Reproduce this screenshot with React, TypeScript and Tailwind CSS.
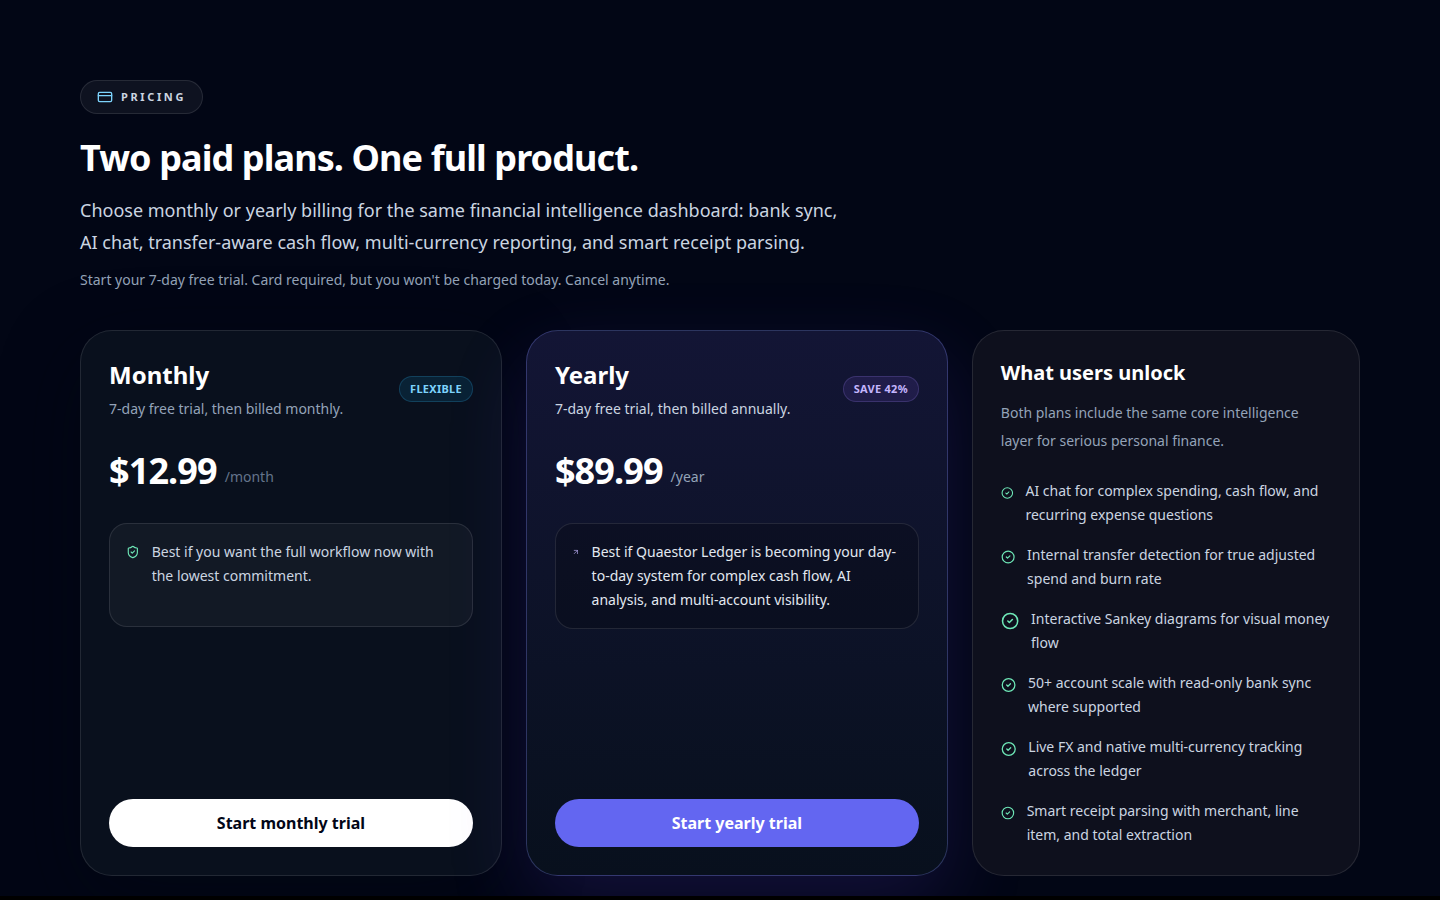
import { ArrowUpRight, CircleCheck, CreditCard, ShieldCheck } from "lucide-react";

const plans = [
  {
    name: "Monthly",
    billing: "7-day free trial, then billed monthly.",
    badge: "Flexible",
    price: "$12.99",
    period: "/month",
    note: "Best if you want the full workflow now with the lowest commitment.",
    icon: ShieldCheck,
    cta: "Start monthly trial",
    styles: {
      card: "border-white/10 bg-[#09101d] shadow-[0_24px_80px_rgba(2,6,18,0.45)]",
      billing: "text-[#94a3b8]",
      badge: "border-[#38bdf8]/20 bg-[#0ea5e9]/12 text-[#7dd3fc]",
      period: "text-[#64748b]",
      box: "border-white/10 bg-white/[0.04] text-[#cbd5e1]",
      icon: "text-[#6ee7b7]",
      button: "bg-white text-[#020617] hover:bg-slate-200",
    },
  },
  {
    name: "Yearly",
    billing: "7-day free trial, then billed annually.",
    badge: "Save 42%",
    price: "$89.99",
    period: "/year",
    note: "Best if Quaestor Ledger is becoming your day-to-day system for complex cash flow, AI analysis, and multi-account visibility.",
    icon: ArrowUpRight,
    cta: "Start yearly trial",
    styles: {
      card: "border-[#818cf8]/30 bg-linear-to-b from-[#131535] to-[#08101d] shadow-[0_30px_80px_rgba(95,62,215,0.18)]",
      billing: "text-[#cbd5e1]",
      badge: "border-[#a78bfa]/20 bg-[#8b5cf6]/12 text-[#c4b5fd]",
      period: "text-[#94a3b8]",
      box: "border-white/10 bg-black/20 text-[#e2e8f0]",
      icon: "text-[#c4b5fd]",
      button: "bg-[#6366f1] text-white hover:bg-[#818cf8]",
    },
  },
];

const features = [
  "AI chat for complex spending, cash flow, and recurring expense questions",
  "Internal transfer detection for true adjusted spend and burn rate",
  "Interactive Sankey diagrams for visual money flow",
  "50+ account scale with read-only bank sync where supported",
  "Live FX and native multi-currency tracking across the ledger",
  "Smart receipt parsing with merchant, line item, and total extraction",
];

const Pricing = () => {
  return (
    <section id="pricing" className="overflow-hidden bg-[#020615] px-6 pt-20 pb-5">
      <div className="mx-auto max-w-[1280px]">
        <div className="max-w-3xl">
          <div className="inline-flex items-center gap-2 rounded-full border border-white/10 bg-white/5 px-4 py-2 text-[11px] leading-4 font-bold tracking-[0.24em] text-[#cbd5e1] uppercase">
            <CreditCard className="h-4 w-4 text-[#7dd3fc]" />
            Pricing
          </div>
          <h2 className="mt-6 text-4xl font-bold tracking-tight text-white">
            Two paid plans. One full product.
          </h2>
          <p className="mt-4 text-lg leading-8 text-[#cbd5e1]">
            Choose monthly or yearly billing for the same financial intelligence dashboard: bank sync, AI chat,
            transfer-aware cash flow, multi-currency reporting, and smart receipt parsing.
          </p>
          <p className="mt-3 text-sm text-[#94a3b8]">
            Start your 7-day free trial. Card required, but you won't be charged today. Cancel anytime.
          </p>
        </div>

        <div className="mt-10 grid gap-6 lg:grid-cols-[1fr_1fr_0.92fr]">
          {plans.map((plan) => (
            <article key={plan.name} className={`flex flex-col rounded-[32px] border p-7 ${plan.styles.card}`}>
              <div className="flex items-center justify-between gap-4">
                <div>
                  <h3 className="text-2xl font-bold text-white">{plan.name}</h3>
                  <p className={`mt-2 text-sm ${plan.styles.billing}`}>{plan.billing}</p>
                </div>
                <span
                  className={`rounded-full border px-2.5 py-1 text-[11px] leading-4 font-bold tracking-wide uppercase ${plan.styles.badge}`}
                >
                  {plan.badge}
                </span>
              </div>

              <div className="mt-8 flex items-end gap-2">
                <span className="text-4xl font-bold tracking-tight text-white">{plan.price}</span>
                <span className={`pb-1 text-sm ${plan.styles.period}`}>{plan.period}</span>
              </div>

              <div className={`mt-8 min-h-[104px] rounded-[18px] border p-4 ${plan.styles.box}`}>
                <div className="flex items-start gap-3">
                  <plan.icon className={`mt-0.5 h-5 w-5 ${plan.styles.icon}`} />
                  <p className="text-sm leading-6">{plan.note}</p>
                </div>
              </div>

              <div className="mt-auto pt-8">
                <button
                  type="button"
                  className={`h-12 w-full rounded-full text-base font-bold transition-colors ${plan.styles.button}`}
                >
                  {plan.cta}
                </button>
              </div>
            </article>
          ))}

          <aside className="rounded-[32px] border border-white/10 bg-[#0e101d] p-7">
            <h3 className="text-xl font-bold text-white">What users unlock</h3>
            <p className="mt-3 text-sm leading-7 text-[#94a3b8]">
              Both plans include the same core intelligence layer for serious personal finance.
            </p>
            <ul className="mt-6 space-y-4">
              {features.map((feature) => (
                <li key={feature} className="flex items-start gap-3 text-sm leading-6 text-[#cbd5e1]">
                  <CircleCheck className="mt-1 h-5 w-5 text-[#6ee7b7]" />
                  <span>{feature}</span>
                </li>
              ))}
            </ul>
          </aside>
        </div>
      </div>
    </section>
  );
};

const App = () => {
  return (
    <main className="min-h-screen bg-black font-['Noto_Sans',sans-serif]">
      <Pricing />
    </main>
  );
};

export default App;
